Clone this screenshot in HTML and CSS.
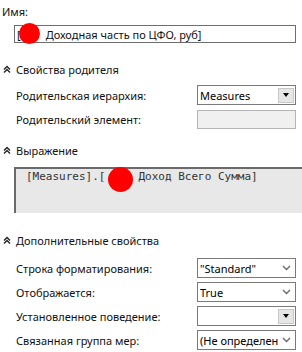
FILE: index.html
```html
<!DOCTYPE html>
<html lang="ru">
<head>
  <meta charset="UTF-8" />
  <title>Свойства вычисления</title>
  <link rel="stylesheet" href="styles.css">
</head>
<body>
  <div class="panel">
    <div class="caption">Имя:</div>
    <div class="name-box">
      <span>[</span><span class="gap"></span><span>Доходная часть по ЦФО, руб]</span>
      <span class="mark mark-name"></span>
    </div>

    <div class="section">
      <svg class="collapse" width="8" height="8" viewBox="0 0 8 8"><path d="M1 4.5L4 1.5L7 4.5M1 7.5L4 4.5L7 7.5"/></svg>
      <span>Свойства родителя</span>
    </div>
    <div class="row">
      <span class="label">Родительская иерархия:</span>
      <div class="combo">
        <span class="value">Measures</span>
        <span class="drop-btn"><i></i></span>
      </div>
    </div>
    <div class="row">
      <span class="label">Родительский элемент:</span>
      <div class="combo disabled"></div>
    </div>

    <div class="section sec-expr">
      <svg class="collapse" width="8" height="8" viewBox="0 0 8 8"><path d="M1 4.5L4 1.5L7 4.5M1 7.5L4 4.5L7 7.5"/></svg>
      <span>Выражение</span>
    </div>
    <div class="expr">
      <span>[Measures].[</span><span class="gap-mono"></span><span>Доход Всего Сумма]</span>
      <span class="mark mark-expr"></span>
    </div>

    <div class="section sec-extra">
      <svg class="collapse" width="8" height="8" viewBox="0 0 8 8"><path d="M1 4.5L4 1.5L7 4.5M1 7.5L4 4.5L7 7.5"/></svg>
      <span>Дополнительные свойства</span>
    </div>
    <div class="row">
      <span class="label">Строка форматирования:</span>
      <div class="combo">
        <span class="value">"Standard"</span>
        <svg class="chev" width="9" height="6" viewBox="0 0 9 6"><path d="M1 1L4.5 4.5L8 1"/></svg>
      </div>
    </div>
    <div class="row">
      <span class="label">Отображается:</span>
      <div class="combo">
        <span class="value">True</span>
        <svg class="chev" width="9" height="6" viewBox="0 0 9 6"><path d="M1 1L4.5 4.5L8 1"/></svg>
      </div>
    </div>
    <div class="row">
      <span class="label">Установленное поведение:</span>
      <div class="combo">
        <span class="value"></span>
        <span class="drop-btn"><i></i></span>
      </div>
    </div>
    <div class="row">
      <span class="label">Связанная группа мер:</span>
      <div class="combo">
        <span class="value">(Не определен</span>
        <svg class="chev" width="9" height="6" viewBox="0 0 9 6"><path d="M1 1L4.5 4.5L8 1"/></svg>
      </div>
    </div>
  </div>
</body>
</html>
```
FILE: styles.css
```css
body {
  margin: 0;
  background: #fff;
  font-family: "Noto Sans", "DejaVu Sans", sans-serif;
  font-size: 11px;
  color: #111;
  overflow: hidden;
}

.panel {
  width: 302px;
  height: 352px;
  padding-top: 5px;
  box-sizing: border-box;
  overflow: hidden;
}

.caption {
  padding-left: 2px;
  line-height: 14px;
  height: 14px;
}

.name-box {
  position: relative;
  display: flex;
  align-items: center;
  margin: 6px 0 0 14px;
  width: 282px;
  height: 18px;
  box-sizing: border-box;
  border: 1px solid #6e6e6e;
  padding-left: 2px;
  white-space: nowrap;
}

.gap {
  display: inline-block;
  width: 25px;
}

.mark {
  position: absolute;
  border-radius: 50%;
  background: #ff0000;
}

.mark-name {
  left: 4px;
  top: -3px;
  width: 21px;
  height: 21px;
}

.section {
  display: flex;
  align-items: center;
  height: 20px;
  margin-top: 16px;
  padding-left: 3px;
}

.section span {
  margin-left: 5px;
}

.sec-expr {
  margin-top: 11px;
}

.sec-extra {
  margin-top: 17px;
}

.collapse path {
  fill: none;
  stroke: #222;
  stroke-width: 1.4;
}

.row {
  display: flex;
  align-items: center;
  justify-content: space-between;
  height: 20px;
  margin-top: 4px;
  padding: 0 6px 0 16px;
}

.section + .row {
  margin-top: 6px;
}

.sec-extra + .row {
  margin-top: 8px;
}

.combo {
  display: flex;
  align-items: center;
  width: 99px;
  height: 20px;
  box-sizing: border-box;
  border: 1px solid #7a7a7a;
  background: #fff;
  padding: 0 4px 0 2px;
}

.combo.disabled {
  background: #f0f0f0;
  border-color: #b4b4b4;
  height: 19px;
}

.value {
  flex: 1;
  overflow: hidden;
  white-space: nowrap;
  color: #000;
}

.drop-btn {
  display: flex;
  align-items: center;
  justify-content: center;
  width: 16px;
  height: 15px;
  margin-right: -3px;
  background: #e6e6e6;
  border: 1px solid #c8c8c8;
  box-sizing: border-box;
}

.drop-btn i {
  width: 0;
  height: 0;
  border-left: 3.5px solid transparent;
  border-right: 3.5px solid transparent;
  border-top: 4px solid #000;
}

.chev path {
  fill: none;
  stroke: #666;
  stroke-width: 1.3;
}

.expr {
  position: relative;
  margin: 7px 0 0 14px;
  height: 46px;
  box-sizing: border-box;
  border-left: 2px solid #6a6a6a;
  border-top: 2px solid #6a6a6a;
  background: #e8e8e8;
  padding: 1px 0 0 10px;
  font-family: "DejaVu Sans Mono", "Liberation Mono", monospace;
  font-size: 11px;
  line-height: 14px;
  white-space: nowrap;
  color: #333;
}

.gap-mono {
  display: inline-block;
  width: 33px;
}

.mark-expr {
  left: 92px;
  top: -2px;
  width: 25px;
  height: 25px;
}
```
